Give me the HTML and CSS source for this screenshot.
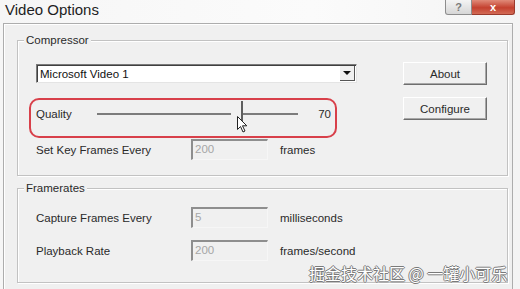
FILE: index.html
```html
<!DOCTYPE html>
<html lang="en">
<head>
  <meta charset="UTF-8">
  <title>Video Options</title>
  <link rel="stylesheet" href="styles.css">
</head>
<body>

  <div class="titlebar">
    <span class="title">Video Options</span>
    <div class="winbtns">
      <span class="help">?</span>
      <span class="close">x</span>
    </div>
  </div>

  <div class="dialog">

    <div class="group compressor">
      <span class="legend">Compressor</span>

      <div class="left-col">
        <div class="combo">
          <span class="combo-text">Microsoft Video 1</span>
          <span class="combo-arrow"></span>
        </div>

        <div class="highlight">
          <span class="q-label">Quality</span>
          <div class="slider">
            <div class="track"></div>
            <div class="thumb"></div>
            <svg class="cursor" width="11" height="17" viewBox="0 0 11 17">
              <path d="M0.5 0.5 L0.5 13.5 L3.5 10.5 L6 16 L8 15 L5.5 9.8 L9.8 9.8 Z" fill="#fff" stroke="#222" stroke-width="1"/>
            </svg>
          </div>
          <span class="q-value">70</span>
        </div>

        <div class="field-row key-row">
          <span class="f-label">Set Key Frames Every</span>
          <span class="field">200</span>
          <span class="unit">frames</span>
        </div>
      </div>

      <div class="right-col">
        <button class="btn">About</button>
        <button class="btn">Configure</button>
      </div>
    </div>

    <div class="group framerates">
      <span class="legend">Framerates</span>

      <div class="field-row">
        <span class="f-label">Capture Frames Every</span>
        <span class="field">5</span>
        <span class="unit">milliseconds</span>
      </div>

      <div class="field-row">
        <span class="f-label">Playback Rate</span>
        <span class="field">200</span>
        <span class="unit">frames/second</span>
      </div>
    </div>

  </div>

  <div class="watermark">掘金技术社区 @ 一罐小可乐</div>

</body>
</html>
```

FILE: styles.css
```css
body {
  margin: 0;
  width: 520px;
  height: 289px;
  overflow: hidden;
  background: linear-gradient(to right, #f6f6f6, #fbfbfb 60%, #f4f4f4);
  font-family: "Liberation Sans", Arial, sans-serif;
  font-size: 11.5px;
  color: #2a2a2a;
  position: relative;
}

.titlebar {
  display: flex;
  align-items: flex-start;
  height: 23px;
}

.title {
  padding: 1px 0 0 5px;
  font-size: 15px;
  line-height: 18px;
  color: #1e1e1e;
}

.winbtns {
  display: flex;
  margin-left: auto;
  margin-right: 5px;
}

.help, .close {
  height: 14px;
  display: flex;
  align-items: center;
  justify-content: center;
  font-weight: bold;
  font-size: 11px;
  border: 1px solid #8d8d8d;
  border-top: none;
}

.help {
  width: 25px;
  color: #7a7a7a;
  background: linear-gradient(#f4f4f4, #d6d6d6);
  border-bottom-left-radius: 3px;
}

.close {
  width: 42px;
  color: #fff;
  background: linear-gradient(#e08a78, #c4412f 55%, #d26a55);
  border-color: #9a3a2c;
  border-left: none;
  border-bottom-right-radius: 3px;
}

.dialog {
  box-sizing: border-box;
  width: 510px;
  height: 280px;
  margin-left: 3px;
  padding: 16px 0 0 13px;
  background: #f0f0f0;
  border: 1px solid #adadad;
  box-shadow: inset 1px 1px 0 #fff;
}

.group {
  position: relative;
  box-sizing: border-box;
  width: 491px;
  border: 1px solid #c2c2c2;
  box-shadow: inset 1px 1px 0 #fff, 1px 1px 0 #fff;
}

.legend {
  position: absolute;
  top: -8px;
  left: 6px;
  padding: 0 2px;
  background: #f0f0f0;
  line-height: 14px;
}

.compressor {
  display: flex;
  gap: 46px;
  height: 136px;
  padding: 21px 0 0 11px;
}

.left-col {
  width: 328px;
}

.combo {
  display: flex;
  align-items: center;
  box-sizing: border-box;
  height: 19px;
  margin: 2px 0 0 7px;
  background: #fff;
  border-top: 1px solid #7a7a7a;
  border-left: 1px solid #7a7a7a;
  border-right: 1px solid #e4e4e4;
  border-bottom: 1px solid #e4e4e4;
  box-shadow: inset 1px 1px 0 #404040;
}

.combo-text {
  flex: 1;
  padding-left: 3px;
  color: #111;
}

.combo-arrow {
  position: relative;
  width: 15px;
  height: 15px;
  margin-right: 1px;
  background: #f0f0f0;
  border-right: 1px solid #555;
  border-bottom: 1px solid #555;
  box-sizing: border-box;
}

.combo-arrow::after {
  content: "";
  position: absolute;
  left: 3px;
  top: 5px;
  border-left: 4px solid transparent;
  border-right: 4px solid transparent;
  border-top: 4px solid #111;
}

.highlight {
  display: flex;
  align-items: center;
  box-sizing: border-box;
  height: 40px;
  width: 308px;
  margin-top: 15px;
  padding: 2px 4px 10px 5px;
  border: 2px solid #d8404a;
  border-radius: 10px;
}

.q-label {
  width: 61px;
}

.slider {
  position: relative;
  width: 201px;
  height: 26px;
}

.track {
  position: absolute;
  left: 0;
  right: 0;
  top: 12px;
  height: 2px;
  background: #7c7c7c;
}

.thumb {
  position: absolute;
  left: 134px;
  top: 0;
  width: 12px;
  height: 26px;
  background: linear-gradient(to right, #f0f0f0 10px, #5e5e5e 10px);
  background-size: 12px 26px;
  background-repeat: no-repeat;
}

.cursor {
  position: absolute;
  left: 140px;
  top: 15px;
}

.q-value {
  margin-left: auto;
}

.field-row {
  display: flex;
  align-items: center;
  height: 21px;
}

.key-row {
  margin: 1px 0 0 7px;
}

.f-label {
  width: 155px;
}

.field {
  box-sizing: border-box;
  width: 77px;
  height: 21px;
  padding: 2px 0 0 2px;
  color: #a6a6a6;
  border-top: 2px solid #8e8e8e;
  border-left: 2px solid #8e8e8e;
  border-right: 1px solid #f6f6f6;
  border-bottom: 1px solid #f6f6f6;
}

.unit {
  margin-left: 12px;
}

.right-col {
  display: flex;
  flex-direction: column;
  gap: 12px;
}

.btn {
  box-sizing: border-box;
  width: 84px;
  height: 23px;
  padding: 0;
  font-family: inherit;
  font-size: 11.5px;
  color: #2a2a2a;
  background: #f0f0f0;
  border: 1px solid #fff;
  border-right-color: #6e6e6e;
  border-bottom-color: #6e6e6e;
  box-shadow: inset -1px -1px 0 #a8a8a8;
}

.framerates {
  display: flex;
  flex-direction: column;
  gap: 12px;
  height: 95px;
  margin-top: 12px;
  padding: 18px 0 0 18px;
}

.watermark {
  position: absolute;
  left: 309px;
  top: 261px;
  font-family: "Noto Sans CJK SC", sans-serif;
  font-size: 16px;
  color: #fff;
  text-shadow: 1px 0 0 #7a7a7a, -1px 0 0 #7a7a7a, 0 1px 0 #7a7a7a, 0 -1px 0 #7a7a7a;
  white-space: nowrap;
}
```
